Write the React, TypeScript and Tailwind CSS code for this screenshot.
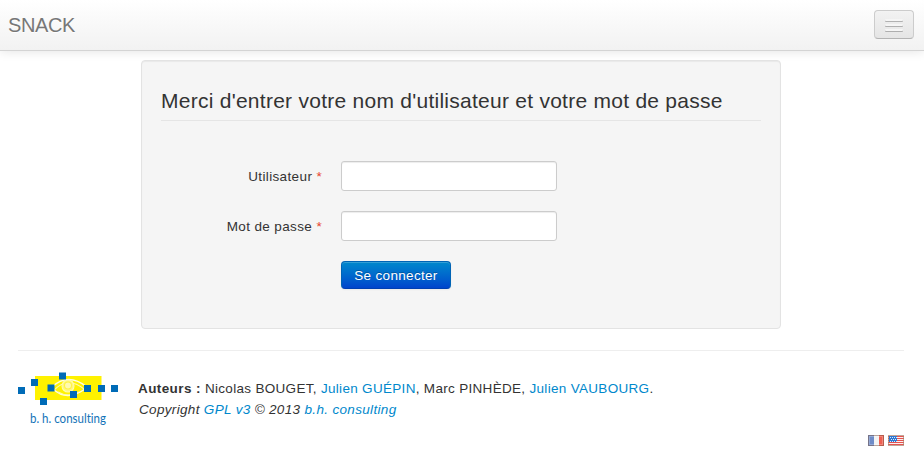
import React from "react";

const squares = [
  [0, 15], [13, 7], [22, 26], [29.5, 12.5], [41, 0.5], [52, 19], [66, 13], [80, 13], [93, 13],
];

function Logo() {
  return (
    <svg width="100" height="55" viewBox="0 0 100 55" className="block shrink-0">
      <rect x="17" y="4" width="66.500" height="24" fill="#fff200" />
      <g fill="none" stroke="#fffbb0" strokeWidth="1.100">
        <path d="M34 15Q50 0 69 15" stroke="#fffde0" strokeWidth="1.500" />
        <path d="M36 18Q50 4 66 17" />
        <path d="M35 17Q49 30 67 17" stroke="#fffde0" strokeWidth="1.500" />
        <path d="M40 20Q50 26 61 20" />
        <circle cx="50" cy="14" r="6" fill="#fff780" />
        <circle cx="50" cy="13.500" r="3.500" stroke="#fff340" fill="#fffab0" />
      </g>
      {squares.map(([x, y]) => (
        <rect key={x} x={x} y={y} width="7" height="7" fill="#006bb7" />
      ))}
      <text
        x="12"
        y="51"
        fontFamily="Lato, sans-serif"
        fontSize="12.500"
        fill="#1473b8"
        textLength="76"
        lengthAdjust="spacingAndGlyphs"
        className="[font-variant-ligatures:none]"
      >
        b. h. consulting
      </text>
    </svg>
  );
}

function FrenchFlag() {
  return (
    <svg width="16" height="11" viewBox="0 0 16 11" className="block">
      <rect width="16" height="11" fill="#f3f3f3" />
      <rect width="6" height="11" fill="#6f8cc8" />
      <rect x="11" width="5" height="11" fill="#ee6052" />
      <rect x="1.500" y="1.500" width="13" height="8" fill="none" stroke="#fff" strokeOpacity=".25" />
      <rect x=".5" y=".5" width="15" height="10" fill="none" stroke="#7d5a48" strokeOpacity=".5" />
    </svg>
  );
}

function AmericanFlag() {
  return (
    <svg width="16" height="11" viewBox="0 0 16 11" className="block">
      <rect width="16" height="11" fill="#fbeeee" />
      <path d="M0 1.500H16M0 3.500H16M0 5.500H16M0 7.500H16M0 9.500H16" stroke="#e65350" />
      <rect x="1" y="1" width="8" height="6" fill="#2d78d2" />
      <path d="M2 2.500H9M3 4.500H9M2 6.500H9" stroke="#d8e8ff" strokeDasharray="1 1" />
      <rect x=".5" y=".5" width="15" height="10" fill="none" stroke="#a5806a" strokeOpacity=".65" />
    </svg>
  );
}

function Field({ label, type }: { label: string; type: string }) {
  return (
    <div className="mb-5 flex h-[30px]">
      <label className="w-[161px] pt-[6px] text-right tracking-[0.37px] whitespace-nowrap">
        {label} <span className="text-[#e8442e]">*</span>
      </label>
      <input
        type={type}
        className="ml-[19px] h-[30px] w-[216px] rounded-[3px] border border-[#ccc] bg-white px-1.5 shadow-[inset_0_1px_1px_rgba(0,0,0,0.075)] outline-none"
      />
    </div>
  );
}

function MenuBar() {
  return <span className="h-[2px] w-[18px] rounded-[1px] bg-[#f5f5f5] shadow-[0_1px_0_rgba(0,0,0,0.25)]" />;
}

export default function App() {
  const link = "text-[#0088cc]";
  return (
    <div className="h-[454px] overflow-hidden bg-white font-['Liberation_Sans',Arial,sans-serif] text-[13.5px] leading-5 text-[#333]">
      <header className="flex h-[51px] items-start justify-between border-b border-[#d4d4d4] bg-linear-to-b from-white to-[#f2f2f2] pr-[10px] pl-2 shadow-[0_1px_10px_rgba(0,0,0,0.1)]">
        <span className="pt-[15px] text-[20px] tracking-[-0.4px] text-[#777] [text-shadow:0_1px_0_#fff]">SNACK</span>
        <button
          aria-label="Menu"
          className="mt-[10px] flex h-[29px] w-10 flex-col items-center gap-[3px] rounded-[4px] border border-[#ccc] border-b-[#b3b3b3] bg-linear-to-b from-[#f2f2f2] to-[#e5e5e5] pt-2 shadow-[inset_0_1px_0_rgba(255,255,255,0.1),0_1px_0_rgba(255,255,255,0.075)]"
        >
          <MenuBar />
          <MenuBar />
          <MenuBar />
        </button>
      </header>
      <main className="mt-[9px] ml-[141px] h-[269px] w-[640px] rounded-[4px] border border-[#e3e3e3] bg-[#f5f5f5] px-[19px] shadow-[inset_0_1px_1px_rgba(0,0,0,0.05)]">
        <h1 className="h-[60px] border-b border-[#e5e5e5] pt-[20px] text-[21px] leading-[40px] tracking-[0.26px] whitespace-nowrap">
          Merci d'entrer votre nom d'utilisateur et votre mot de passe
        </h1>
        <form className="pt-10">
          <Field label="Utilisateur" type="text" />
          <Field label="Mot de passe" type="password" />
          <button
            type="button"
            className="ml-[180px] block h-7 w-[110px] rounded-[4px] border border-[#0064b5] border-b-[#003fb0] bg-linear-to-b from-[#0088cc] to-[#0044cc] pt-px leading-5 tracking-[0.32px] text-white shadow-[inset_0_1px_0_rgba(255,255,255,0.2),0_1px_2px_rgba(0,0,0,0.05)] [text-shadow:0_-1px_0_rgba(0,0,0,0.25)]"
          >
            Se connecter
          </button>
        </form>
      </main>
      <footer className="mt-[21px] mr-5 ml-[18px] border-t border-[#eee]">
        <div className="flex pt-[21px]">
          <Logo />
          <div className="ml-5 pt-[6px] leading-[21px] tracking-[0.31px] whitespace-nowrap">
            <p>
              <b className="tracking-[0.4px]">Auteurs :</b> Nicolas BOUGET, <a className={link}>Julien GUÉPIN</a>, Marc PINHÈDE, <a className={link}>Julien VAUBOURG</a>.
            </p>
            <p className="pl-px italic tracking-[0.33px]">
              Copyright <a className={link}>GPL v3</a> © 2013 <a className={link}>b.h. consulting</a>
            </p>
          </div>
        </div>
        <div className="mt-2 flex justify-end gap-1">
          <FrenchFlag />
          <AmericanFlag />
        </div>
      </footer>
    </div>
  );
}
